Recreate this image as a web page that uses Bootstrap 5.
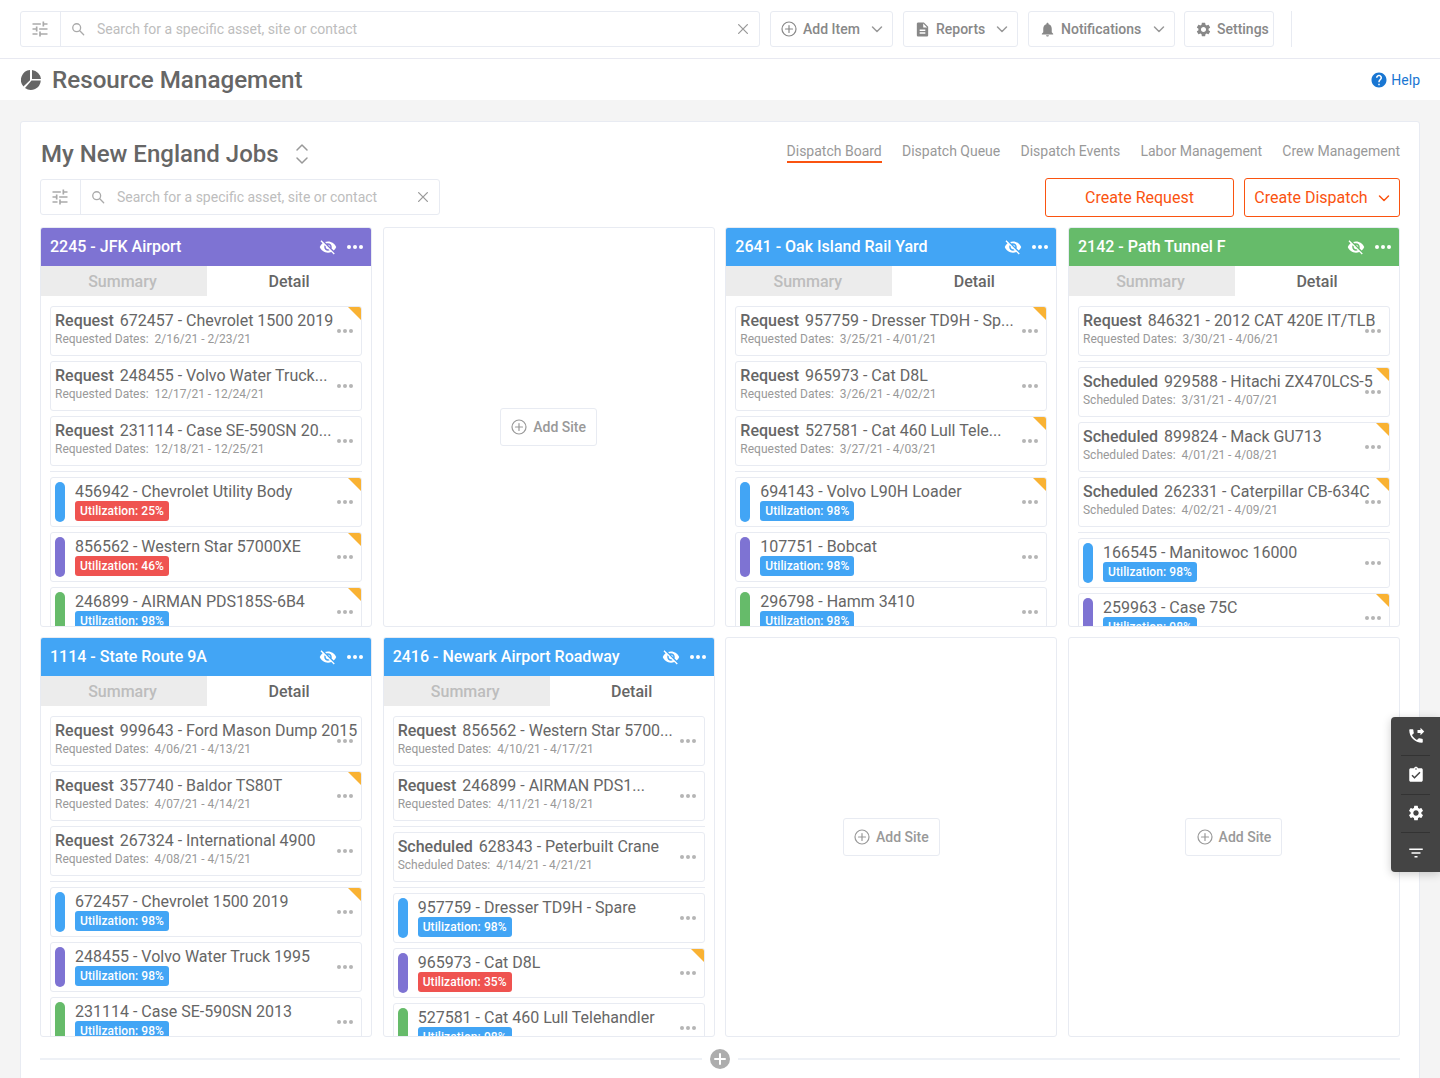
<!DOCTYPE html>
<html lang="en">
<head>
<meta charset="utf-8">
<title>Resource Management</title>
<link href="https://cdn.jsdelivr.net/npm/bootstrap@5.3.0/dist/css/bootstrap.min.css" rel="stylesheet">
<style>
html,body{height:1078px;overflow:hidden}
body{font-family:Roboto,"Liberation Sans",sans-serif;background:#f4f4f4;color:#666;font-size:14px}
.ic{display:block;fill:currentColor;flex:none}
.ln{fill:none;stroke:currentColor;stroke-width:1.5;stroke-linecap:round;stroke-linejoin:round}
.topbar{height:59px;padding:11px 20px;background:#fff;border-bottom:1px solid #e8e9f1;gap:10px}
.srch{height:36px;background:#fff;border:1px solid #e8ebf2;border-radius:3px;color:#aaa}
.srch-main{width:740px}
.srch-sub{width:400px;margin-top:1px}
.srch-tune{width:40px;height:100%;border-right:1px solid #e8ebf2;padding-right:2px}
.srch input{border:0;outline:0;padding:0;flex:1;min-width:0;font-size:14px;color:#666;background:transparent}
.srch input::placeholder{color:#bdbdbd;opacity:1}
.srch-icon{margin:0 12px 0 10px}
.srch-x{margin-right:9px;color:#999}
.tbtn{height:36px;padding:0 9px 0 10px;border:1px solid #e8ebf2;border-radius:3px;background:#fff;color:#888;font-weight:500;font-size:14px;gap:5px}
.tbtn-add{width:123px;gap:6px}.tbtn-rep{width:115px}.tbtn-not{width:147px}.tbtn-set{width:90px;margin-left:-1px}
.tsep{width:1px;height:36px;background:#e8ebf2;margin-left:7px}
.tchev{margin-left:auto;color:#999}
.pagehead{height:41px;padding:1px 20px 0 21px;background:#fff}
.pagehead h1{font-size:24.2px;font-weight:500;line-height:30px;margin:0 0 0 11px;color:#666}
.helplink{color:#1976d2;text-decoration:none;font-size:14px;gap:3px}
.shell{margin:21px 20px 0;padding:18px 19px 0;background:#fff;border:1px solid #e8ebf2;border-radius:3px;height:1000px}
.headrow{height:38px;padding-bottom:10px}
.headrow h2{font-size:24px;font-weight:500;line-height:26px;margin:0 0 0 1px;color:#666}
.vtabs{gap:20.2px;margin-top:-4px}
.vtabs a{color:#999;text-decoration:none;font-size:14px;line-height:20px;border-bottom:2px solid transparent}
.vtabs a.on{border-bottom-color:#fa5310}
.rowtwo{height:39px}
.obtns{gap:10px}
.obtn{height:39px;border:1px solid #fa5310;border-radius:3px;background:#fff;color:#fa5310;font-size:16px;padding:0}
.obtn-req{width:189px}
.obtn-dis{width:156px;gap:10px}
.boards{display:grid;grid-template-columns:repeat(4,1fr);gap:10px 10.67px;margin-top:10px}
.site{height:400px;border:1px solid #e8ebf2;border-radius:3px;background:#fff;overflow:hidden}
.sitehd{height:38px;padding:0 8px 0 9px;color:#fff;font-size:16px;font-weight:500;gap:10px}
.sitehd .nm{flex:1;white-space:nowrap}
.c-blue{background:#42a5f5}.c-purple{background:#7e73d3}.c-green{background:#66bb6a}.c-red{background:#ef5350}
.sitetabs{height:30px}
.sitetabs div{flex:1 1 50%;line-height:32px;text-align:center;font-size:16px;font-weight:500}
.sitetabs .off{flex:0 0 166px;padding-right:3px;background:#ececec;color:#bdbdbd}
.sitetabs .act{color:#666}
.sitelist{padding:10px 9px 0;gap:5px}
.job{position:relative;flex:none;height:50px;border:1px solid #e8ebf2;border-radius:3px;background:#fff;padding:4px 4px 3px;overflow:hidden}
.job b{font-weight:500;margin-right:2px}
.job-t{font-size:16px;line-height:20px;color:#666;white-space:nowrap}
.job-d{font-size:12px;line-height:16px;color:#999}
.job-a{padding-left:24px}
.pill{position:absolute;left:4px;top:4px;width:10px;height:40px;border-radius:5px}
.util{display:block;width:fit-content;height:20px;line-height:20px;padding:0 5px;margin-top:-1px;border-radius:3px;color:#fff;font-size:12px;font-weight:500;letter-spacing:.08px}
.dots{position:absolute;right:8px;top:50%;margin-top:-2px;color:#b5b5b5}
.flag{position:absolute;top:0;right:0;width:0;height:0;border-top:13px solid #f9b233;border-left:13px solid transparent}
.sep{flex:none;height:1px;background:#e8ebf2}
.addsite{height:38px;width:97px;border:1px solid #e8ebf2;border-radius:3px;background:#fff;color:#999;font-weight:500;font-size:14px;gap:6px;padding:0}
.morerow{margin-top:12px;gap:8px;color:#adadad}
.morerow i{flex:1;height:2px;background:#eef1f6}
.sidetools{position:fixed;right:0;top:717px;width:49px;height:155px;background:#444;border-radius:4px 0 0 4px;color:#fff;box-shadow:0 2px 10px rgba(0,0,0,.2);padding:0 10px}
.sidetools div{height:39px;border-bottom:1px solid #333}
.sidetools div:last-child{border:0}
</style>
</head>
<body>
<svg width="0" height="0" class="position-absolute">
<symbol id="i-tune" viewBox="0 0 24 24"><path d="M3 17v2h6v-2H3zM3 5v2h10V5H3zm10 16v-2h8v-2h-8v-2h-2v6h2zM7 9v2H3v2h4v2h2V9H7zm14 4v-2H11v2h10zm-6-4h2V7h4V5h-4V3h-2v6z"/></symbol>
<symbol id="i-search" viewBox="0 0 16 16"><circle class="ln" cx="6.5" cy="6.5" r="4.5"/><path class="ln" d="M10 10l4.5 4.5"/></symbol>
<symbol id="i-x" viewBox="0 0 16 16"><path class="ln" d="M3 3l10 10M13 3L3 13"/></symbol>
<symbol id="i-plus" viewBox="0 0 16 16"><circle class="ln" cx="8" cy="8" r="7" style="stroke-width:1.2"/><path class="ln" d="M8 4.5v7M4.5 8h7" style="stroke-width:1.2"/></symbol>
<symbol id="i-chev" viewBox="0 0 12 12"><path class="ln" d="M1.5 4L6 8.5 10.500 4"/></symbol>
<symbol id="i-file" viewBox="0 0 24 24"><path d="M14 2H6c-1.100 0-2 .9-2 2v16c0 1.100.9 2 2 2h12c1.100 0 2-.9 2-2V8l-6-6zm2 16H8v-2h8v2zm0-4H8v-2h8v2zm-3-5V3.500L18.500 9H13z"/></symbol>
<symbol id="i-bell" viewBox="0 0 24 24"><path d="M12 22c1.100 0 2-.9 2-2h-4c0 1.100.9 2 2 2zm6-6v-5c0-3.070-1.630-5.640-4.500-6.320V4c0-.83-.67-1.500-1.500-1.500s-1.500.67-1.500 1.500v.68C7.640 5.360 6 7.920 6 11v5l-2 2v1h16v-1l-2-2z"/></symbol>
<symbol id="i-gear" viewBox="0 0 24 24"><path d="M19.140 12.940c.04-.3.06-.61.06-.94 0-.32-.02-.64-.07-.94l2.030-1.580a.49.49 0 0 0 .12-.61l-1.920-3.320a.488.488 0 0 0-.59-.22l-2.390.96c-.5-.38-1.030-.7-1.620-.94l-.36-2.540a.484.484 0 0 0-.48-.41h-3.840c-.24 0-.43.17-.47.41l-.36 2.540c-.59.24-1.130.57-1.620.94l-2.390-.96c-.22-.08-.47 0-.59.22L2.740 8.870c-.12.21-.08.47.12.61l2.030 1.580c-.05.3-.09.63-.09.94s.02.64.07.94l-2.030 1.580a.49.49 0 0 0-.12.61l1.920 3.320c.12.22.37.29.59.22l2.390-.96c.5.38 1.030.7 1.620.94l.36 2.540c.05.24.24.41.48.41h3.840c.24 0 .44-.17.47-.41l.36-2.540c.59-.24 1.130-.56 1.620-.94l2.390.96c.22.08.47 0 .59-.22l1.920-3.320c.12-.22.07-.47-.12-.61l-2.010-1.580zM12 15.600c-1.980 0-3.600-1.620-3.600-3.600s1.620-3.600 3.600-3.600 3.600 1.620 3.600 3.600-1.620 3.600-3.600 3.600z"/></symbol>
<symbol id="i-pie" viewBox="0 0 20 20"><path d="M9 0a10 10 0 0 0-6.600 16.500L9 10.300zM11 0v9h9a10 10 0 0 0-9-9zM4 18a10 10 0 0 0 15.800-7.500H10.500z"/></symbol>
<symbol id="i-help" viewBox="0 0 24 24"><path d="M12 2C6.480 2 2 6.480 2 12s4.480 10 10 10 10-4.480 10-10S17.520 2 12 2zm1 17h-2v-2h2v2zm2.070-7.750l-.9.92C13.450 12.900 13 13.500 13 15h-2v-.5c0-1.100.45-2.100 1.170-2.830l1.240-1.260c.37-.36.59-.86.59-1.410 0-1.100-.9-2-2-2s-2 .9-2 2H8c0-2.210 1.790-4 4-4s4 1.790 4 4c0 .88-.36 1.680-.93 2.250z"/></symbol>
<symbol id="i-off" viewBox="0 0 24 24"><path d="M12 7c2.760 0 5 2.240 5 5 0 .65-.13 1.260-.36 1.830l2.920 2.920c1.510-1.260 2.700-2.890 3.430-4.750-1.730-4.390-6-7.500-11-7.500-1.400 0-2.740.25-3.980.7l2.160 2.160C10.740 7.130 11.350 7 12 7zM2 4.270l2.280 2.280.46.46C3.080 8.300 1.780 10.020 1 12c1.730 4.390 6 7.500 11 7.500 1.550 0 3.030-.3 4.380-.84l.42.42L19.730 22 21 20.730 3.270 3 2 4.270zM7.530 9.800l1.550 1.550c-.05.21-.08.43-.08.65 0 1.660 1.340 3 3 3 .22 0 .44-.03.65-.08l1.550 1.550c-.67.33-1.410.53-2.200.53-2.760 0-5-2.240-5-5 0-.79.2-1.530.53-2.200zm4.310-.78l3.150 3.150.02-.16c0-1.660-1.340-3-3-3l-.17.01z"/></symbol>
<symbol id="i-dots" viewBox="0 0 16 4"><circle cx="2" cy="2" r="2"/><circle cx="8" cy="2" r="2"/><circle cx="14" cy="2" r="2"/></symbol>
<symbol id="i-updown" viewBox="0 0 14 24"><path class="ln" d="M2 8l5-5 5 5M2 16l5 5 5-5"/></symbol>
<symbol id="i-phone" viewBox="0 0 24 24"><path d="M18 11l5-5-5-5v3h-4v4h4v3zm2 4.500c-1.250 0-2.450-.2-3.570-.57-.35-.11-.74-.03-1.020.24l-2.200 2.200c-2.830-1.440-5.150-3.750-6.590-6.590l2.200-2.210c.28-.26.36-.65.25-1C8.700 6.450 8.500 5.250 8.500 4c0-.55-.45-1-1-1H4c-.55 0-1 .45-1 1 0 9.390 7.610 17 17 17 .55 0 1-.45 1-1v-3.500c0-.55-.45-1-1-1z"/></symbol>
<symbol id="i-clip" viewBox="0 0 24 24"><path d="M19 3h-4.180C14.400 1.840 13.300 1 12 1c-1.300 0-2.400.84-2.820 2H5c-1.100 0-2 .9-2 2v14c0 1.100.9 2 2 2h14c1.100 0 2-.9 2-2V5c0-1.100-.9-2-2-2zm-7 0c.55 0 1 .45 1 1s-.45 1-1 1-1-.45-1-1 .45-1 1-1zm-2 14l-4-4 1.410-1.410L10 14.170l6.590-6.590L18 9l-8 8z"/></symbol>
<symbol id="i-filter" viewBox="0 0 24 24"><path d="M10 18h4v-2h-4v2zM3 6v2h18V6H3zm3 7h12v-2H6v2z"/></symbol>
<symbol id="i-pluswhite" viewBox="0 0 20 20"><circle cx="10" cy="10" r="10" fill="#adadad"/><path d="M10 5v10M5 10h10" stroke="#fff" stroke-width="2" stroke-linecap="round"/></symbol>
</svg>

<header class="topbar d-flex align-items-center">
  <div class="srch srch-main d-flex align-items-center">
    <div class="srch-tune d-flex align-items-center justify-content-center"><svg class="ic" width="20" height="20"><use href="#i-tune"/></svg></div>
    <svg class="ic srch-icon" width="14" height="14"><use href="#i-search"/></svg>
    <input type="text" placeholder="Search for a specific asset, site or contact" aria-label="Search">
    <svg class="ic srch-x" width="14" height="14"><use href="#i-x"/></svg>
  </div>
  <button class="tbtn tbtn-add d-flex align-items-center" type="button"><svg class="ic" width="16" height="16"><use href="#i-plus"/></svg>Add Item<svg class="ic tchev" width="12" height="12"><use href="#i-chev"/></svg></button>
  <button class="tbtn tbtn-rep d-flex align-items-center" type="button"><svg class="ic" width="17" height="17"><use href="#i-file"/></svg>Reports<svg class="ic tchev" width="12" height="12"><use href="#i-chev"/></svg></button>
  <button class="tbtn tbtn-not d-flex align-items-center" type="button"><svg class="ic" width="17" height="17"><use href="#i-bell"/></svg>Notifications<svg class="ic tchev" width="12" height="12"><use href="#i-chev"/></svg></button>
  <button class="tbtn tbtn-set d-flex align-items-center" type="button"><svg class="ic" width="17" height="17"><use href="#i-gear"/></svg>Settings</button>
  <div class="tsep"></div>
</header>

<div class="pagehead d-flex align-items-center">
  <svg class="ic" width="20" height="20"><use href="#i-pie"/></svg>
  <h1>Resource Management</h1>
  <a href="#" class="helplink ms-auto d-flex align-items-center"><svg class="ic" width="18" height="18"><use href="#i-help"/></svg>Help</a>
</div>

<main class="shell">
  <div class="headrow d-flex align-items-center justify-content-between">
    <div class="d-flex align-items-center gap-3"><h2>My New England Jobs</h2><svg class="ic" width="14" height="24" style="color:#999"><use href="#i-updown"/></svg></div>
    <nav class="vtabs d-flex"><a class="on" href="#">Dispatch Board</a><a href="#">Dispatch Queue</a><a href="#">Dispatch Events</a><a href="#">Labor Management</a><a href="#">Crew Management</a></nav>
  </div>
  <div class="rowtwo d-flex justify-content-between align-items-start">
    <div class="srch srch-sub d-flex align-items-center">
      <div class="srch-tune d-flex align-items-center justify-content-center"><svg class="ic" width="20" height="20"><use href="#i-tune"/></svg></div>
      <svg class="ic srch-icon" width="14" height="14"><use href="#i-search"/></svg>
      <input type="text" placeholder="Search for a specific asset, site or contact" aria-label="Search">
      <svg class="ic srch-x" width="14" height="14"><use href="#i-x"/></svg>
    </div>
    <div class="obtns d-flex">
      <button class="obtn obtn-req" type="button">Create Request</button>
      <button class="obtn obtn-dis d-flex align-items-center justify-content-center" type="button">Create Dispatch<svg class="ic" width="12" height="12"><use href="#i-chev"/></svg></button>
    </div>
  </div>

  <div class="boards">
    <section class="site">
      <div class="sitehd c-purple d-flex align-items-center"><span class="nm">2245 - JFK Airport</span><svg class="ic" width="18" height="18"><use href="#i-off"/></svg><svg class="ic" width="16" height="4"><use href="#i-dots"/></svg></div>
      <div class="sitetabs d-flex"><div class="off">Summary</div><div class="act">Detail</div></div>
      <div class="sitelist d-flex flex-column">
        <div class="job"><div class="job-t"><b>Request</b> 672457 - Chevrolet 1500 2019</div><div class="job-d">Requested Dates:&nbsp; 2/16/21 - 2/23/21</div><svg class="ic dots" width="16" height="4"><use href="#i-dots"/></svg><span class="flag"></span></div>
        <div class="job"><div class="job-t"><b>Request</b> 248455 - Volvo Water Truck...</div><div class="job-d">Requested Dates:&nbsp; 12/17/21 - 12/24/21</div><svg class="ic dots" width="16" height="4"><use href="#i-dots"/></svg></div>
        <div class="job"><div class="job-t"><b>Request</b> 231114 - Case SE-590SN 20...</div><div class="job-d">Requested Dates:&nbsp; 12/18/21 - 12/25/21</div><svg class="ic dots" width="16" height="4"><use href="#i-dots"/></svg></div>
        <div class="sep"></div>
        <div class="job job-a"><i class="pill c-blue"></i><div class="job-t">456942 - Chevrolet Utility Body</div><span class="util c-red">Utilization: 25%</span><svg class="ic dots" width="16" height="4"><use href="#i-dots"/></svg><span class="flag"></span></div>
        <div class="job job-a"><i class="pill c-purple"></i><div class="job-t">856562 - Western Star 57000XE</div><span class="util c-red">Utilization: 46%</span><svg class="ic dots" width="16" height="4"><use href="#i-dots"/></svg><span class="flag"></span></div>
        <div class="job job-a"><i class="pill c-green"></i><div class="job-t">246899 - AIRMAN PDS185S-6B4</div><span class="util c-blue">Utilization: 98%</span><svg class="ic dots" width="16" height="4"><use href="#i-dots"/></svg><span class="flag"></span></div>
      </div>
    </section>
    <section class="site d-flex align-items-center justify-content-center"><button class="addsite d-flex align-items-center justify-content-center" type="button"><svg class="ic" width="16" height="16"><use href="#i-plus"/></svg>Add Site</button></section>
    <section class="site">
      <div class="sitehd c-blue d-flex align-items-center"><span class="nm">2641 - Oak Island Rail Yard</span><svg class="ic" width="18" height="18"><use href="#i-off"/></svg><svg class="ic" width="16" height="4"><use href="#i-dots"/></svg></div>
      <div class="sitetabs d-flex"><div class="off">Summary</div><div class="act">Detail</div></div>
      <div class="sitelist d-flex flex-column">
        <div class="job"><div class="job-t"><b>Request</b> 957759 - Dresser TD9H - Sp...</div><div class="job-d">Requested Dates:&nbsp; 3/25/21 - 4/01/21</div><svg class="ic dots" width="16" height="4"><use href="#i-dots"/></svg><span class="flag"></span></div>
        <div class="job"><div class="job-t"><b>Request</b> 965973 - Cat D8L</div><div class="job-d">Requested Dates:&nbsp; 3/26/21 - 4/02/21</div><svg class="ic dots" width="16" height="4"><use href="#i-dots"/></svg></div>
        <div class="job"><div class="job-t"><b>Request</b> 527581 - Cat 460 Lull Tele...</div><div class="job-d">Requested Dates:&nbsp; 3/27/21 - 4/03/21</div><svg class="ic dots" width="16" height="4"><use href="#i-dots"/></svg><span class="flag"></span></div>
        <div class="sep"></div>
        <div class="job job-a"><i class="pill c-blue"></i><div class="job-t">694143 - Volvo L90H Loader</div><span class="util c-blue">Utilization: 98%</span><svg class="ic dots" width="16" height="4"><use href="#i-dots"/></svg><span class="flag"></span></div>
        <div class="job job-a"><i class="pill c-purple"></i><div class="job-t">107751 - Bobcat</div><span class="util c-blue">Utilization: 98%</span><svg class="ic dots" width="16" height="4"><use href="#i-dots"/></svg></div>
        <div class="job job-a"><i class="pill c-green"></i><div class="job-t">296798 - Hamm 3410</div><span class="util c-blue">Utilization: 98%</span><svg class="ic dots" width="16" height="4"><use href="#i-dots"/></svg></div>
      </div>
    </section>
    <section class="site">
      <div class="sitehd c-green d-flex align-items-center"><span class="nm">2142 - Path Tunnel F</span><svg class="ic" width="18" height="18"><use href="#i-off"/></svg><svg class="ic" width="16" height="4"><use href="#i-dots"/></svg></div>
      <div class="sitetabs d-flex"><div class="off">Summary</div><div class="act">Detail</div></div>
      <div class="sitelist d-flex flex-column">
        <div class="job"><div class="job-t"><b>Request</b> 846321 - 2012 CAT 420E IT/TLB</div><div class="job-d">Requested Dates:&nbsp; 3/30/21 - 4/06/21</div><svg class="ic dots" width="16" height="4"><use href="#i-dots"/></svg></div>
        <div class="sep"></div>
        <div class="job"><div class="job-t"><b>Scheduled</b> 929588 - Hitachi ZX470LCS-5</div><div class="job-d">Scheduled Dates:&nbsp; 3/31/21 - 4/07/21</div><svg class="ic dots" width="16" height="4"><use href="#i-dots"/></svg><span class="flag"></span></div>
        <div class="job"><div class="job-t"><b>Scheduled</b> 899824 - Mack GU713</div><div class="job-d">Scheduled Dates:&nbsp; 4/01/21 - 4/08/21</div><svg class="ic dots" width="16" height="4"><use href="#i-dots"/></svg><span class="flag"></span></div>
        <div class="job"><div class="job-t"><b>Scheduled</b> 262331 - Caterpillar CB-634C</div><div class="job-d">Scheduled Dates:&nbsp; 4/02/21 - 4/09/21</div><svg class="ic dots" width="16" height="4"><use href="#i-dots"/></svg><span class="flag"></span></div>
        <div class="sep"></div>
        <div class="job job-a"><i class="pill c-blue"></i><div class="job-t">166545 - Manitowoc 16000</div><span class="util c-blue">Utilization: 98%</span><svg class="ic dots" width="16" height="4"><use href="#i-dots"/></svg></div>
        <div class="job job-a"><i class="pill c-purple"></i><div class="job-t">259963 - Case 75C</div><span class="util c-blue">Utilization: 98%</span><svg class="ic dots" width="16" height="4"><use href="#i-dots"/></svg><span class="flag"></span></div>
      </div>
    </section>
    <section class="site">
      <div class="sitehd c-blue d-flex align-items-center"><span class="nm">1114 - State Route 9A</span><svg class="ic" width="18" height="18"><use href="#i-off"/></svg><svg class="ic" width="16" height="4"><use href="#i-dots"/></svg></div>
      <div class="sitetabs d-flex"><div class="off">Summary</div><div class="act">Detail</div></div>
      <div class="sitelist d-flex flex-column">
        <div class="job"><div class="job-t"><b>Request</b> 999643 - Ford Mason Dump 2015</div><div class="job-d">Requested Dates:&nbsp; 4/06/21 - 4/13/21</div><svg class="ic dots" width="16" height="4"><use href="#i-dots"/></svg></div>
        <div class="job"><div class="job-t"><b>Request</b> 357740 - Baldor TS80T</div><div class="job-d">Requested Dates:&nbsp; 4/07/21 - 4/14/21</div><svg class="ic dots" width="16" height="4"><use href="#i-dots"/></svg><span class="flag"></span></div>
        <div class="job"><div class="job-t"><b>Request</b> 267324 - International 4900</div><div class="job-d">Requested Dates:&nbsp; 4/08/21 - 4/15/21</div><svg class="ic dots" width="16" height="4"><use href="#i-dots"/></svg></div>
        <div class="sep"></div>
        <div class="job job-a"><i class="pill c-blue"></i><div class="job-t">672457 - Chevrolet 1500 2019</div><span class="util c-blue">Utilization: 98%</span><svg class="ic dots" width="16" height="4"><use href="#i-dots"/></svg><span class="flag"></span></div>
        <div class="job job-a"><i class="pill c-purple"></i><div class="job-t">248455 - Volvo Water Truck 1995</div><span class="util c-blue">Utilization: 98%</span><svg class="ic dots" width="16" height="4"><use href="#i-dots"/></svg></div>
        <div class="job job-a"><i class="pill c-green"></i><div class="job-t">231114 - Case SE-590SN 2013</div><span class="util c-blue">Utilization: 98%</span><svg class="ic dots" width="16" height="4"><use href="#i-dots"/></svg></div>
      </div>
    </section>
    <section class="site">
      <div class="sitehd c-blue d-flex align-items-center"><span class="nm">2416 - Newark Airport Roadway</span><svg class="ic" width="18" height="18"><use href="#i-off"/></svg><svg class="ic" width="16" height="4"><use href="#i-dots"/></svg></div>
      <div class="sitetabs d-flex"><div class="off">Summary</div><div class="act">Detail</div></div>
      <div class="sitelist d-flex flex-column">
        <div class="job"><div class="job-t"><b>Request</b> 856562 - Western Star 5700...</div><div class="job-d">Requested Dates:&nbsp; 4/10/21 - 4/17/21</div><svg class="ic dots" width="16" height="4"><use href="#i-dots"/></svg></div>
        <div class="job"><div class="job-t"><b>Request</b> 246899 - AIRMAN PDS1...</div><div class="job-d">Requested Dates:&nbsp; 4/11/21 - 4/18/21</div><svg class="ic dots" width="16" height="4"><use href="#i-dots"/></svg></div>
        <div class="sep"></div>
        <div class="job"><div class="job-t"><b>Scheduled</b> 628343 - Peterbuilt Crane</div><div class="job-d">Scheduled Dates:&nbsp; 4/14/21 - 4/21/21</div><svg class="ic dots" width="16" height="4"><use href="#i-dots"/></svg></div>
        <div class="sep"></div>
        <div class="job job-a"><i class="pill c-blue"></i><div class="job-t">957759 - Dresser TD9H - Spare</div><span class="util c-blue">Utilization: 98%</span><svg class="ic dots" width="16" height="4"><use href="#i-dots"/></svg></div>
        <div class="job job-a"><i class="pill c-purple"></i><div class="job-t">965973 - Cat D8L</div><span class="util c-red">Utilization: 35%</span><svg class="ic dots" width="16" height="4"><use href="#i-dots"/></svg><span class="flag"></span></div>
        <div class="job job-a"><i class="pill c-green"></i><div class="job-t">527581 - Cat 460 Lull Telehandler</div><span class="util c-blue">Utilization: 98%</span><svg class="ic dots" width="16" height="4"><use href="#i-dots"/></svg></div>
      </div>
    </section>
    <section class="site d-flex align-items-center justify-content-center"><button class="addsite d-flex align-items-center justify-content-center" type="button"><svg class="ic" width="16" height="16"><use href="#i-plus"/></svg>Add Site</button></section>
    <section class="site d-flex align-items-center justify-content-center"><button class="addsite d-flex align-items-center justify-content-center" type="button"><svg class="ic" width="16" height="16"><use href="#i-plus"/></svg>Add Site</button></section>
  </div>
  <div class="morerow d-flex align-items-center"><i></i><svg class="ic" width="20" height="20"><use href="#i-pluswhite"/></svg><i></i></div>
</main>

<aside class="sidetools d-flex flex-column">
  <div class="d-flex align-items-center justify-content-center"><svg class="ic" width="18" height="18"><use href="#i-phone"/></svg></div>
  <div class="d-flex align-items-center justify-content-center"><svg class="ic" width="18" height="18"><use href="#i-clip"/></svg></div>
  <div class="d-flex align-items-center justify-content-center"><svg class="ic" width="18" height="18"><use href="#i-gear"/></svg></div>
  <div class="d-flex align-items-center justify-content-center"><svg class="ic" width="18" height="18"><use href="#i-filter"/></svg></div>
</aside>
<script src="https://cdn.jsdelivr.net/npm/bootstrap@5.3.0/dist/js/bootstrap.bundle.min.js"></script>
</body>
</html>
